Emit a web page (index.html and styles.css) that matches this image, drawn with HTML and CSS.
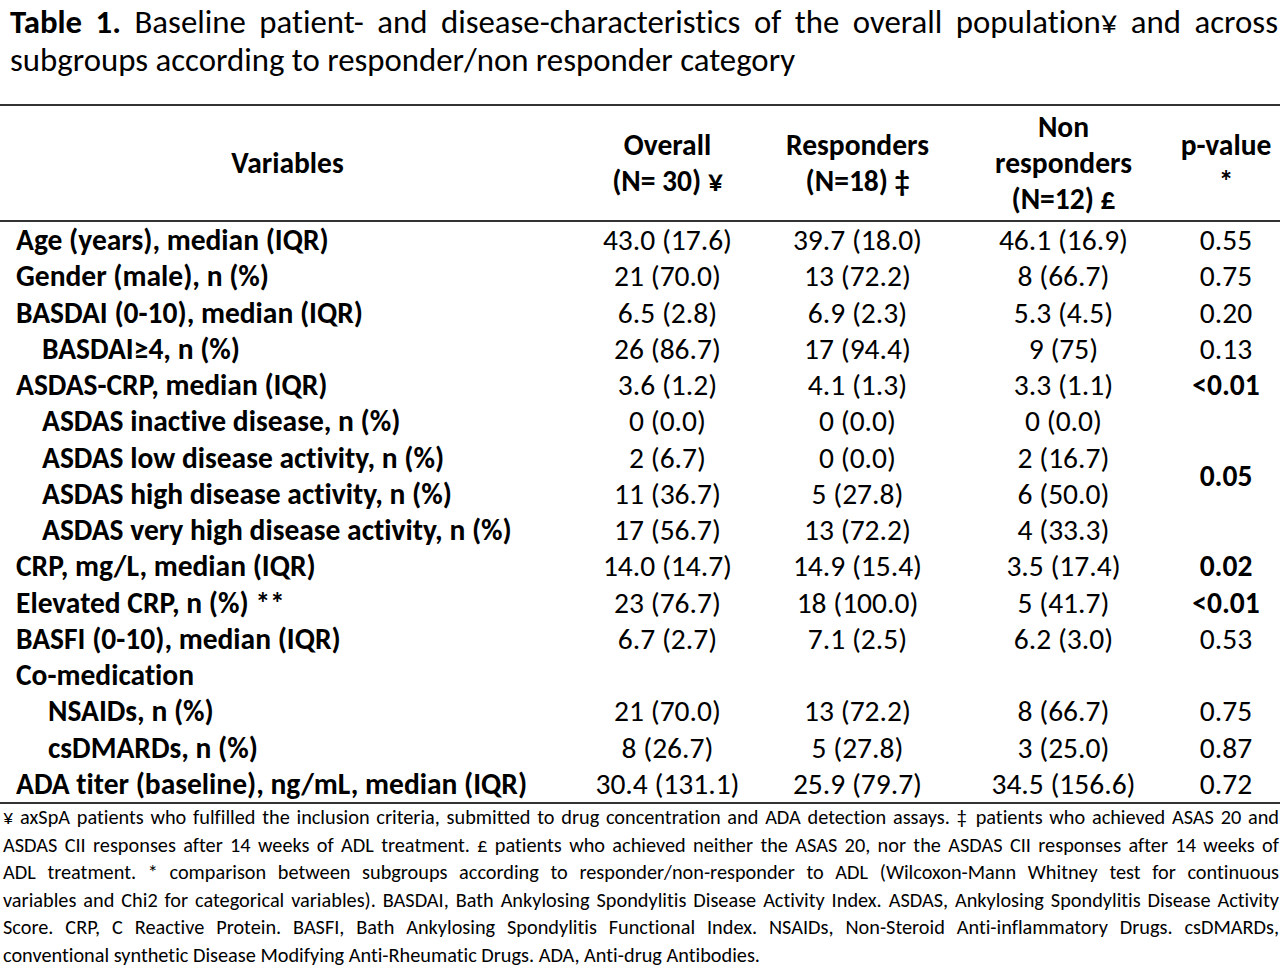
FILE: index.html
```html
<!DOCTYPE html>
<html lang="en">
<head>
<meta charset="utf-8">
<title>Table 1</title>
<link rel="stylesheet" href="styles.css">
</head>
<body>
<div class="page">
  <div class="caption">
    <span class="line"><b>Table 1.</b> Baseline patient- and disease-characteristics of the overall population¥ and across</span>
    <span class="line last">subgroups according to responder/non responder category</span>
  </div>
  <table class="data">
    <colgroup>
      <col class="c-var">
      <col class="c-all">
      <col class="c-resp">
      <col class="c-non">
      <col class="c-p">
    </colgroup>
    <thead>
      <tr>
        <th>Variables</th>
        <th>Overall<br>(N= 30) ¥</th>
        <th>Responders<br>(N=18) ‡</th>
        <th>Non<br>responders<br>(N=12) £</th>
        <th>p-value<br>*</th>
      </tr>
    </thead>
    <tbody>
      <tr><td class="lbl">Age (years), median (IQR)</td><td>43.0 (17.6)</td><td>39.7 (18.0)</td><td>46.1 (16.9)</td><td>0.55</td></tr>
      <tr><td class="lbl">Gender (male), n (%)</td><td>21 (70.0)</td><td>13 (72.2)</td><td>8 (66.7)</td><td>0.75</td></tr>
      <tr><td class="lbl">BASDAI (0-10), median (IQR)</td><td>6.5 (2.8)</td><td>6.9 (2.3)</td><td>5.3 (4.5)</td><td>0.20</td></tr>
      <tr><td class="lbl sub">BASDAI≥4, n (%)</td><td>26 (86.7)</td><td>17 (94.4)</td><td>9 (75)</td><td>0.13</td></tr>
      <tr><td class="lbl">ASDAS-CRP, median (IQR)</td><td>3.6 (1.2)</td><td>4.1 (1.3)</td><td>3.3 (1.1)</td><td class="sig">&lt;0.01</td></tr>
      <tr><td class="lbl sub">ASDAS inactive disease, n (%)</td><td>0 (0.0)</td><td>0 (0.0)</td><td>0 (0.0)</td><td class="sig" rowspan="4">0.05</td></tr>
      <tr><td class="lbl sub">ASDAS low disease activity, n (%)</td><td>2 (6.7)</td><td>0 (0.0)</td><td>2 (16.7)</td></tr>
      <tr><td class="lbl sub">ASDAS high disease activity, n (%)</td><td>11 (36.7)</td><td>5 (27.8)</td><td>6 (50.0)</td></tr>
      <tr><td class="lbl sub">ASDAS very high disease activity, n (%)</td><td>17 (56.7)</td><td>13 (72.2)</td><td>4 (33.3)</td></tr>
      <tr><td class="lbl">CRP, mg/L, median (IQR)</td><td>14.0 (14.7)</td><td>14.9 (15.4)</td><td>3.5 (17.4)</td><td class="sig">0.02</td></tr>
      <tr><td class="lbl">Elevated CRP, n (%) **</td><td>23 (76.7)</td><td>18 (100.0)</td><td>5 (41.7)</td><td class="sig">&lt;0.01</td></tr>
      <tr><td class="lbl">BASFI (0-10), median (IQR)</td><td>6.7 (2.7)</td><td>7.1 (2.5)</td><td>6.2 (3.0)</td><td>0.53</td></tr>
      <tr><td class="lbl">Co-medication</td><td></td><td></td><td></td><td></td></tr>
      <tr><td class="lbl sub2">NSAIDs, n (%)</td><td>21 (70.0)</td><td>13 (72.2)</td><td>8 (66.7)</td><td>0.75</td></tr>
      <tr><td class="lbl sub2">csDMARDs, n (%)</td><td>8 (26.7)</td><td>5 (27.8)</td><td>3 (25.0)</td><td>0.87</td></tr>
      <tr><td class="lbl">ADA titer (baseline), ng/mL, median (IQR)</td><td>30.4 (131.1)</td><td>25.9 (79.7)</td><td>34.5 (156.6)</td><td>0.72</td></tr>
    </tbody>
  </table>
  <div class="notes">
    <span class="line">¥ axSpA patients who fulfilled the inclusion criteria, submitted to drug concentration and ADA detection assays. ‡ patients who achieved ASAS 20 and</span>
    <span class="line">ASDAS CII responses after 14 weeks of ADL treatment. £ patients who achieved neither the ASAS 20, nor the ASDAS CII responses after 14 weeks of</span>
    <span class="line">ADL treatment. * comparison between subgroups according to responder/non-responder to ADL (Wilcoxon-Mann Whitney test for continuous</span>
    <span class="line">variables and Chi2 for categorical variables). BASDAI, Bath Ankylosing Spondylitis Disease Activity Index. ASDAS, Ankylosing Spondylitis Disease Activity</span>
    <span class="line">Score. CRP, C Reactive Protein. BASFI, Bath Ankylosing Spondylitis Functional Index. NSAIDs, Non-Steroid Anti-inflammatory Drugs. csDMARDs,</span>
    <span class="line last">conventional synthetic Disease Modifying Anti-Rheumatic Drugs. ADA, Anti-drug Antibodies.</span>
  </div>
</div>
</body>
</html>
```
FILE: styles.css
```css
html, body {
  margin: 0;
  padding: 0;
  background: #ffffff;
}

body {
  font-family: Carlito, Lato, "Open Sans", sans-serif;
  font-variant-ligatures: none;
  color: #000000;
}

.page {
  width: 1280px;
}

.caption {
  padding: 3px 2px 0 10px;
  height: 101px;
  font-size: 32.8px;
  line-height: 38px;
}

.caption .line,
.notes .line {
  display: block;
  text-align: justify;
  text-align-last: justify;
}

.caption .line.last,
.notes .line.last {
  text-align-last: left;
}

.data {
  width: 1280px;
  border-collapse: collapse;
  table-layout: fixed;
  font-size: 29.5px;
}

.c-var { width: 575px; }
.c-all { width: 185px; }
.c-resp { width: 195px; }
.c-non { width: 217px; }
.c-p { width: 108px; }

.data thead tr {
  border-top: 2px solid #333333;
  border-bottom: 2px solid #333333;
}

.data th {
  height: 114px;
  padding: 0;
  font-weight: 700;
  line-height: 36px;
  text-align: center;
  vertical-align: middle;
}

.data td {
  height: 36.25px;
  padding: 0;
  text-align: center;
  vertical-align: middle;
  line-height: 32px;
  white-space: nowrap;
}

.data tbody tr:last-child {
  border-bottom: 2px solid #333333;
}

.data td.lbl {
  text-align: left;
  font-weight: 700;
  padding-left: 16px;
}

.data td.lbl.sub {
  padding-left: 42px;
}

.data td.lbl.sub2 {
  padding-left: 48px;
}

.data td.sig {
  font-weight: 700;
}

.notes {
  padding: 0 1px 0 3px;
  font-size: 20.3px;
  line-height: 27.6px;
}
```
